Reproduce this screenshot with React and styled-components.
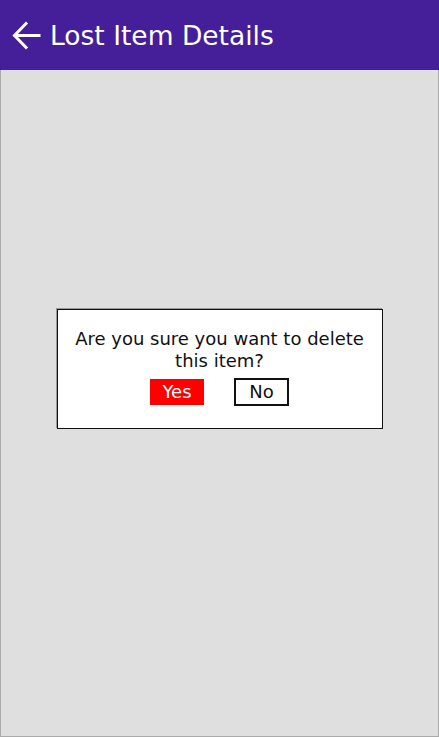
import React from "react";
import styled, { createGlobalStyle } from "styled-components";

const GlobalStyle = createGlobalStyle`
  html, body {
    margin: 0;
    padding: 0;
    height: 100%;
  }
  body {
    font-family: "DejaVu Sans", "Liberation Sans", sans-serif;
  }
  #root {
    height: 100%;
  }
`;

const Screen = styled.div`
  position: relative;
  display: flex;
  flex-direction: column;
  width: 439px;
  height: 737px;
  box-sizing: border-box;
  background: #dfdfdf;
`;

const Header = styled.header`
  display: flex;
  align-items: center;
  gap: 9px;
  height: 70px;
  padding: 0 12px;
  flex-shrink: 0;
  background: #451e9a;
  color: #fff;
`;

const BackBtn = styled.button`
  display: flex;
  align-items: center;
  justify-content: center;
  width: 29px;
  height: 29px;
  padding: 0;
  border: none;
  background: transparent;
  cursor: pointer;
`;

const Title = styled.h1`
  margin: 0;
  font-size: 26.5px;
  font-weight: normal;
`;

const Body = styled.main`
  flex: 1;
  border: 1px solid #aaa;
  border-top: none;
`;

/* modal layer, sits over the whole screen */
const Overlay = styled.div`
  position: absolute;
  inset: 0;
  display: flex;
  align-items: center;
  justify-content: center;
`;

const Dialog = styled.div`
  width: 326px;
  box-sizing: border-box;
  background: #fff;
  border: 1px solid #111;
  box-shadow: -1px -1px 0 0 #999;
  padding: 18px 8px 22px;
  text-align: center;
`;

const Message = styled.p`
  margin: 0 0 6px;
  font-size: 18px;
  line-height: 22px;
  color: #111;
`;

const Actions = styled.div`
  display: flex;
  justify-content: center;
  align-items: center;
  gap: 30px;
`;

const ActionBtn = styled.button`
  box-sizing: border-box;
  width: ${(p) => (p.$danger ? "54px" : "55px")};
  height: ${(p) => (p.$danger ? "26px" : "28px")};
  padding: 0;
  font-family: inherit;
  font-size: 18px;
  color: ${(p) => (p.$danger ? "#fff" : "#111")};
  background: ${(p) => (p.$danger ? "#ff0000" : "#fff")};
  border: ${(p) => (p.$danger ? "none" : "2px solid #111")};
  cursor: pointer;
`;

const BackArrow = () => (
  <svg width="29" height="29" viewBox="0 0 29 29" fill="none">
    <path
      d="M27 14.5H3M14 2.5L2.5 14.5L14 26.5"
      stroke="#fff"
      strokeWidth="3"
      strokeLinecap="square"
    />
  </svg>
);

const App = () => {
  return (
    <>
      <GlobalStyle />
      <Screen>
        <Header>
          <BackBtn type="button" aria-label="Back">
            <BackArrow />
          </BackBtn>
          <Title>Lost Item Details</Title>
        </Header>
        <Body />
        <Overlay>
          <Dialog>
            <Message>
              Are you sure you want to delete
              <br />
              this item?
            </Message>
            <Actions>
              <ActionBtn type="button" $danger>
                Yes
              </ActionBtn>
              <ActionBtn type="button">No</ActionBtn>
            </Actions>
          </Dialog>
        </Overlay>
      </Screen>
    </>
  );
};

export default App;
